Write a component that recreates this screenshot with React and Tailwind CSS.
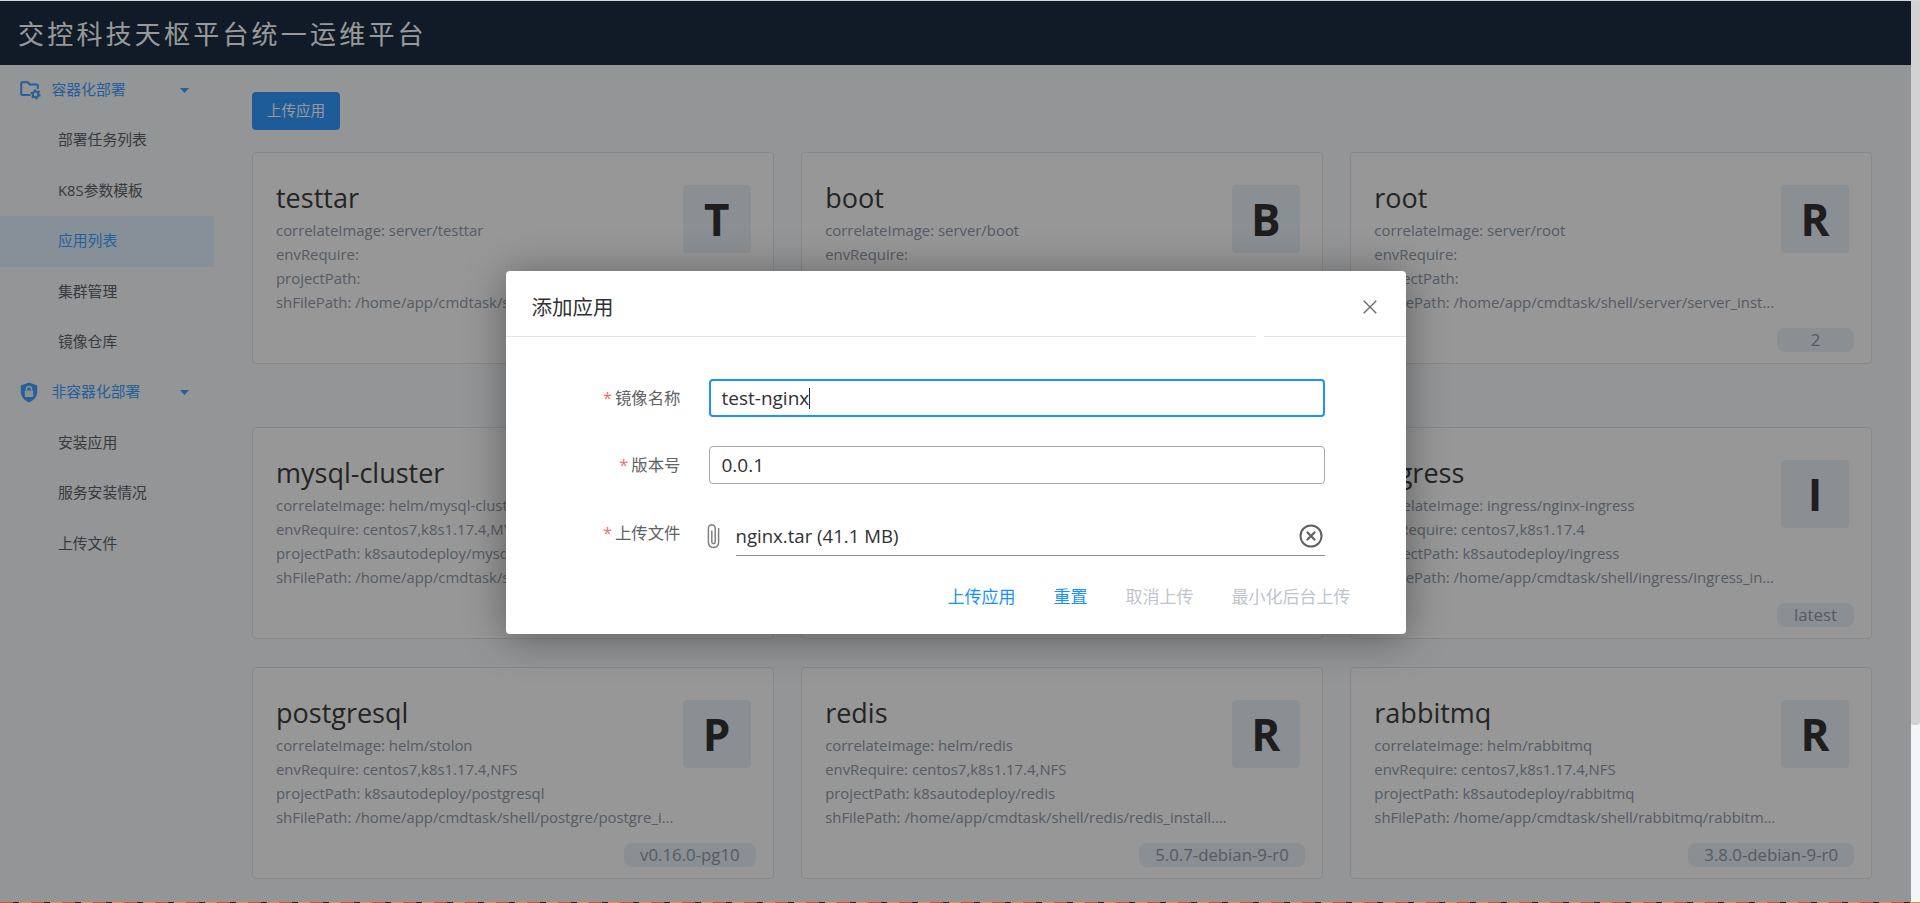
import React from "react";

const cards = [
  [
    { t: "testtar", a: "T", c: "server/testtar", e: "", p: "", s: "/home/app/cmdtask/shell/server/testtar_install.sh", v: "1" },
    { t: "boot", a: "B", c: "server/boot", e: "", p: "", s: "/home/app/cmdtask/shell/server/boot_install.sh", v: "1" },
    { t: "root", a: "R", c: "server/root", e: "", p: "", s: "/home/app/cmdtask/shell/server/server_install.sh", v: "2" },
  ],
  [
    { t: "mysql-cluster", a: "M", c: "helm/mysql-cluster", e: "centos7,k8s1.17.4,MYSQL", p: "k8sautodeploy/mysql-cluster", s: "/home/app/cmdtask/shell/mysql/mysql_install.sh", v: "5.7" },
    { t: "harbor", a: "H", c: "helm/harbor", e: "centos7,k8s1.17.4", p: "k8sautodeploy/harbor", s: "/home/app/cmdtask/shell/harbor/harbor_install.sh", v: "1.0" },
    { t: "ingress", a: "I", c: "ingress/nginx-ingress", e: "centos7,k8s1.17.4", p: "k8sautodeploy/ingress", s: "/home/app/cmdtask/shell/ingress/ingress_install.sh", v: "latest" },
  ],
  [
    { t: "postgresql", a: "P", c: "helm/stolon", e: "centos7,k8s1.17.4,NFS", p: "k8sautodeploy/postgresql", s: "/home/app/cmdtask/shell/postgre/postgre_install.sh", v: "v0.16.0-pg10" },
    { t: "redis", a: "R", c: "helm/redis", e: "centos7,k8s1.17.4,NFS", p: "k8sautodeploy/redis", s: "/home/app/cmdtask/shell/redis/redis_install.sh", v: "5.0.7-debian-9-r0" },
    { t: "rabbitmq", a: "R", c: "helm/rabbitmq", e: "centos7,k8s1.17.4,NFS", p: "k8sautodeploy/rabbitmq", s: "/home/app/cmdtask/shell/rabbitmq/rabbitmq_install.sh", v: "3.8.0-debian-9-r0" },
  ],
];

function Caret() {
  return (
    <svg width="9" height="5" viewBox="0 0 9 5" className="shrink-0">
      <polygon points="0,0 9,0 4.5,5" fill="#409eff" />
    </svg>
  );
}

function FolderIcon() {
  return (
    <svg width="21" height="19" viewBox="0 0 21 19" className="shrink-0">
      <path d="M10.5 14H2.2a1 1 0 0 1-1-1V2.2a1 1 0 0 1 1-1h5.6l2 2.2h7a1 1 0 0 1 1 1V8" fill="none" stroke="#409eff" strokeWidth="2" />
      <circle cx="15.6" cy="13.4" r="2.8" fill="none" stroke="#409eff" strokeWidth="2" />
      <circle cx="15.6" cy="13.4" r="4.3" fill="none" stroke="#409eff" strokeWidth="1.6" strokeDasharray="2 2.5" />
    </svg>
  );
}

function ShieldIcon() {
  return (
    <svg width="18" height="21" viewBox="0 0 18 21" className="shrink-0">
      <path d="M9 .5 17.2 3.5v6.6c0 4.8-3.4 8.4-8.2 10.4C4.2 18.500 .8 14.900 .8 10.100V3.500z" fill="#409eff" />
      <rect x="4.800" y="8.500" width="8.400" height="6.500" rx="1" fill="#e8f0f8" />
      <path d="M6.500 8.500V7a2.500 2.500 0 0 1 5 0v1.500" fill="none" stroke="#e8f0f8" strokeWidth="1.400" />
    </svg>
  );
}

function SubItem({ children, active }) {
  return (
    <div className={active ? "h-[50.4px] pl-[58px] pb-[2px] flex items-center bg-[#e1f0ff] text-[#409eff]" : "h-[50.4px] pl-[58px] pb-[2px] flex items-center text-[#606266]"}>
      {children}
    </div>
  );
}

function Group({ icon, label }) {
  return (
    <div className="h-[50.4px] flex items-center pl-[20px] text-[#409eff]">
      <span className="w-[31.500px] flex items-center">{icon}</span>
      <span className="w-[128.500px] pb-[2px]">{label}</span>
      <Caret />
    </div>
  );
}

function Sidebar() {
  return (
    <aside className="w-[214px] shrink-0 text-[14.8px]">
      <Group icon={<FolderIcon />} label="容器化部署" />
      <SubItem>部署任务列表</SubItem>
      <SubItem>K8S参数模板</SubItem>
      <SubItem active>应用列表</SubItem>
      <SubItem>集群管理</SubItem>
      <SubItem>镜像仓库</SubItem>
      <Group icon={<ShieldIcon />} label="非容器化部署" />
      <SubItem>安装应用</SubItem>
      <SubItem>服务安装情况</SubItem>
      <SubItem>上传文件</SubItem>
    </aside>
  );
}

function Card({ d }) {
  return (
    <div className="h-[212px] bg-[#fcfcfc] border border-[#dfe3e6] rounded-[4px] flex flex-col justify-between">
      <div className="flex">
        <div className="flex-1 min-w-0 pl-[23px] pt-[25px] pr-[3px]">
          <div className="text-[27px] leading-[40px] text-[#3c3c3c]">{d.t}</div>
          <div className="text-[14.900px] leading-[24px] text-[#8f98a6]">
            <div className="truncate">correlateImage: {d.c}</div>
            <div className="truncate">envRequire: {d.e}</div>
            <div className="truncate">projectPath: {d.p}</div>
            <div className="truncate">shFilePath: {d.s}</div>
          </div>
        </div>
        <div className="w-[68px] h-[68px] mt-[32px] mr-[22px] shrink-0 rounded-[4px] bg-[#e6eef5] flex items-center justify-center text-[44px] font-bold text-[#333333]">
          {d.a}
        </div>
      </div>
      <div className="flex justify-end pr-[17px] pb-[11px]">
        <span className="h-[24px] min-w-[77px] px-[16px] rounded-[8px] bg-[#e5eef5] text-[16.800px] leading-[24px] text-center text-[#8f98a3]">{d.v}</span>
      </div>
    </div>
  );
}

function Label({ children }) {
  return (
    <div className="w-[175px] shrink-0 pt-px text-right text-[16.400px] text-[#606266]">
      <span className="text-[#f56c6c] mr-[3px]">*</span>
      {children}
    </div>
  );
}

function Modal() {
  return (
    <div className="w-[900px] h-[363px] bg-white rounded-[4px] shadow-[0_4px_40px_rgba(0,0,0,0.38)] flex flex-col text-[#303133]">
      <div className="h-[65px] flex items-center justify-between pl-[26px] pr-[29px] pt-[7px]">
        <span className="text-[20.500px] pt-px text-[#303133]">添加应用</span>
        <svg width="14" height="14" viewBox="0 0 14 14">
          <path d="M.7.7 13.300 13.300M13.300.7.7 13.300" stroke="#666666" strokeWidth="1.300" fill="none" />
        </svg>
      </div>
      <div className="flex h-px shrink-0">
        <div className="w-[750px] bg-[#e4e4e4]" />
        <div className="flex-1 ml-[8px] bg-[#e4e4e4]" />
      </div>
      <div className="pt-[42px] flex flex-col gap-[29px]">
        <div className="flex items-center">
          <Label>镜像名称</Label>
          <div className="ml-[28px] w-[616px] h-[38px] rounded-[4px] border-2 border-[#1e90ff] px-[11px] flex items-center text-[19px]">
            <span>test-nginx</span>
            <span className="w-px h-[21px] bg-[#303133]" />
          </div>
        </div>
        <div className="flex items-center">
          <Label>版本号</Label>
          <div className="ml-[28px] w-[616px] h-[38px] rounded-[4px] border border-[#a8a8a8] px-[12px] flex items-center text-[19px]">0.0.1</div>
        </div>
        <div className="flex items-start h-[43px]">
          <div className="pt-[7px]"><Label>上传文件</Label></div>
          <div className="ml-[28px] w-[616px] flex h-[43px]">
            <div className="w-[27px] shrink-0 pt-[11px] -ml-[2px] mr-[2px]">
              <svg width="13" height="25" viewBox="0 0 13 25">
                <path d="M4.800 6.500V18a1.700 1.700 0 0 0 3.400 0V4.200a3.400 3.400 0 0 0-6.800 0v14.300a5.100 5.100 0 0 0 10.200 0V4" fill="none" stroke="#808080" strokeWidth="1.500" />
              </svg>
            </div>
            <div className="flex-1 border-b border-[#8c8c8c] flex items-center justify-between text-[18.600px] pt-[4px] pr-[2px]">
              <span>nginx.tar (41.1 MB)</span>
              <svg width="24" height="24" viewBox="0 0 24 24">
                <circle cx="12" cy="12" r="10.500" fill="none" stroke="#606060" strokeWidth="2" />
                <path d="M8.500 8.500l7 7M15.500 8.500l-7 7" stroke="#606060" strokeWidth="2.200" strokeLinecap="round" />
              </svg>
            </div>
          </div>
        </div>
      </div>
      <div className="mt-[27px] flex justify-end gap-[38px] pr-[55px] text-[17px] leading-[28px]">
        <span className="text-[#1890ff]">上传应用</span>
        <span className="text-[#1890ff]">重置</span>
        <span className="text-[#c0c4cc]">取消上传</span>
        <span className="text-[#c0c4cc]">最小化后台上传</span>
      </div>
    </div>
  );
}

export default function App() {
  return (
    <div className="w-[1920px] h-[903px] overflow-hidden flex flex-col bg-white font-['Open_Sans','Noto_Sans_CJK_SC',sans-serif]">
      <div className="h-px bg-[#d6d8da] shrink-0" />
      <div className="flex h-[901px] shrink-0">
        <div className="relative w-[1911px] shrink-0 flex flex-col bg-[#f5f8fb]">
          <header className="h-[64px] shrink-0 bg-[#1b2d41] flex items-center pl-[18px] pt-[2px] text-[26px] tracking-[3.200px] text-white">
            交控科技天枢平台统一运维平台
          </header>
          <div className="flex flex-1 min-h-0">
            <Sidebar />
            <main className="flex-1 pl-[38px] pr-[39px] pt-[27px]">
              <div className="w-[88px] h-[38px] rounded-[4px] bg-[#3398ff] text-white text-[14.600px] flex items-center justify-center">上传应用</div>
              <div className="mt-[22px] grid grid-cols-3 gap-x-[27.500px] mb-[63px]">
                {cards[0].map((d) => <Card key={d.t} d={d} />)}
              </div>
              <div className="grid grid-cols-3 gap-x-[27.500px] mb-[28px]">
                {cards[1].map((d) => <Card key={d.t} d={d} />)}
              </div>
              <div className="grid grid-cols-3 gap-x-[27.500px]">
                {cards[2].map((d) => <Card key={d.t} d={d} />)}
              </div>
            </main>
          </div>
          <div className="absolute inset-0 bg-black/40 flex justify-center items-start pt-[270px]">
            <Modal />
          </div>
        </div>
        <div className="flex-1 flex flex-col bg-[#f4f5f8]">
          <div className="h-[724px] rounded-b-[3px] bg-[#d2d2d2]" />
        </div>
      </div>
      <div className="h-px shrink-0 bg-[repeating-linear-gradient(90deg,#c8552c_0,#c8552c_13px,#3a1a12_13px,#3a1a12_19px,#e09050_19px,#e09050_31px)]" />
    </div>
  );
}
